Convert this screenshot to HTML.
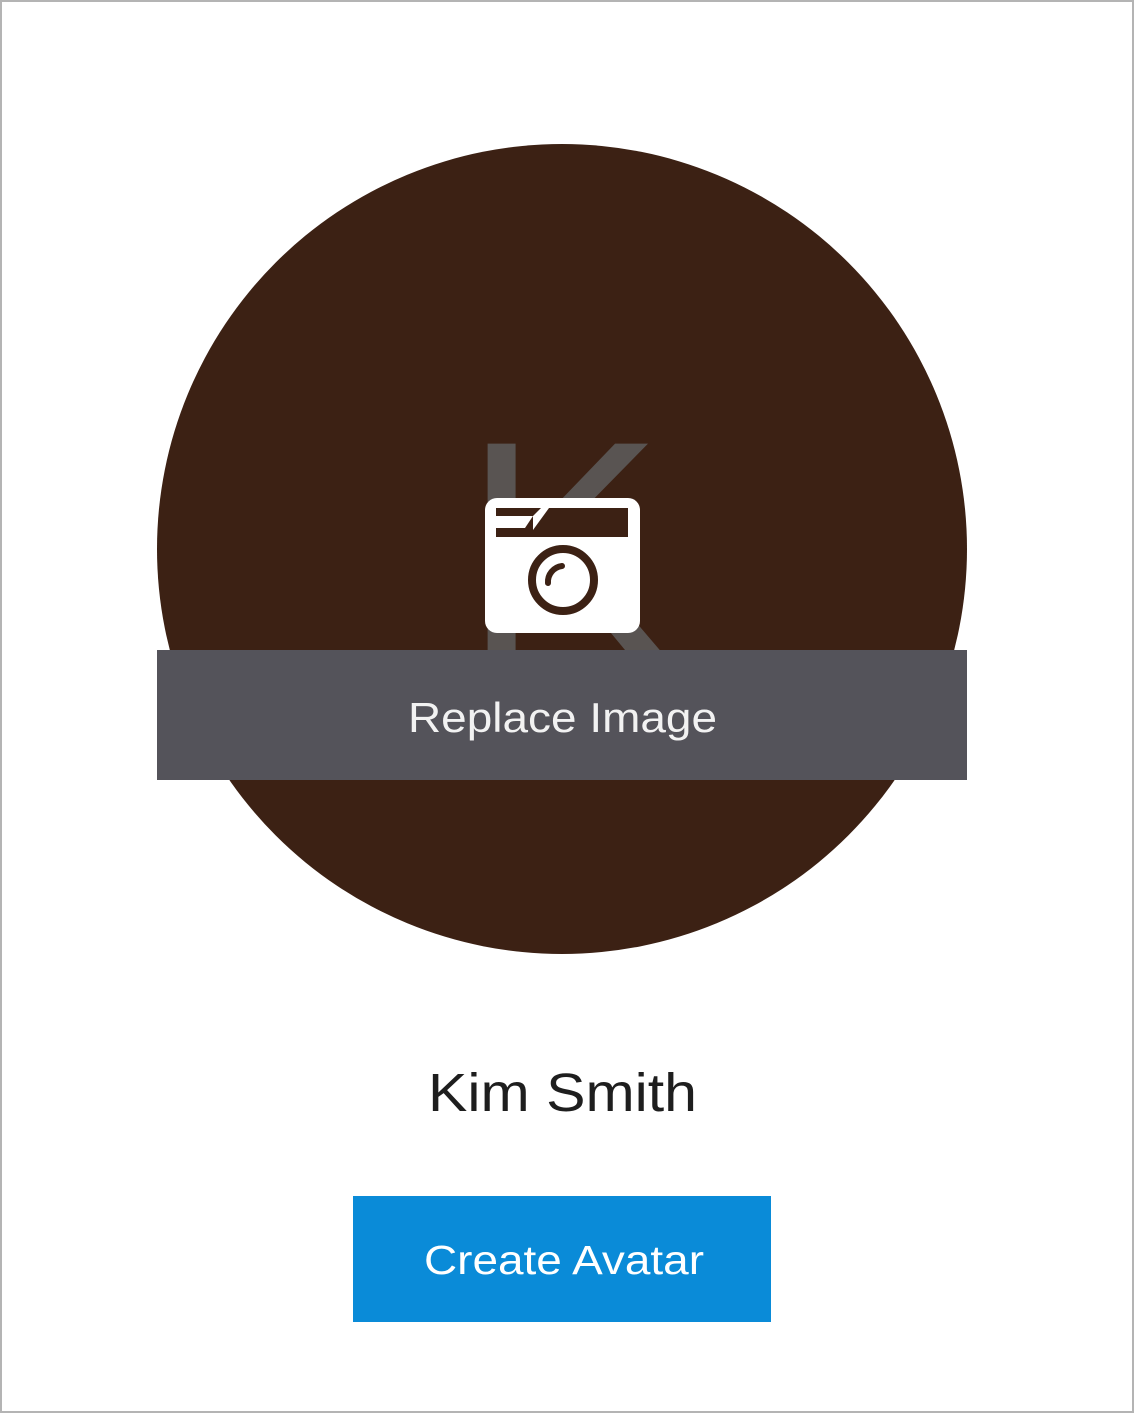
<!DOCTYPE html>
<html><head><meta charset="utf-8"><style>
html,body{margin:0;padding:0;background:#fff;}
body{width:1134px;height:1413px;position:relative;overflow:hidden;font-family:"Liberation Sans",Arial,sans-serif;}
.frame{position:absolute;left:0;top:0;width:1130px;height:1409px;border:2px solid #b4b4b4;}
svg{position:absolute;left:0;top:0;}
</style></head><body>
<div class="frame"></div>
<svg width="1134" height="1413" viewBox="0 0 1134 1413">
  <circle cx="562" cy="549" r="405" fill="#3c2114"/>
  <text x="463" y="650" font-family="Liberation Sans, Arial, sans-serif" font-size="300" fill="#595452">K</text>
  <rect x="485" y="498" width="155" height="135" rx="12" fill="#fff"/>
  <path d="M496 508 H628 V537 H496 Z" fill="#3c2114"/>
  <path d="M496 516 H533 L525 528 H496 Z" fill="#fff"/>
  <path d="M533 516 L541 508 L549 508 L533 530 Z" fill="#fff"/>
  <circle cx="563" cy="580" r="31" fill="none" stroke="#3c2114" stroke-width="8"/>
  <path d="M548 583 A16 16 0 0 1 562 566" fill="none" stroke="#3c2114" stroke-width="6" stroke-linecap="round"/>
  <rect x="157" y="650" width="810" height="130" fill="#54535a"/>
  <text x="408" y="732" textLength="309" lengthAdjust="spacingAndGlyphs" font-family="Liberation Sans, Arial, sans-serif" font-size="42" fill="#f2f2f2">Replace Image</text>
  <text x="428" y="1111" textLength="269" lengthAdjust="spacingAndGlyphs" font-family="Liberation Sans, Arial, sans-serif" font-size="54" fill="#1e1e1e">Kim Smith</text>
  <rect x="353" y="1196" width="418" height="126" fill="#0a8bd8"/>
  <text x="424" y="1274" textLength="280" lengthAdjust="spacingAndGlyphs" font-family="Liberation Sans, Arial, sans-serif" font-size="41" fill="#fff">Create Avatar</text>
</svg>
</body></html>
